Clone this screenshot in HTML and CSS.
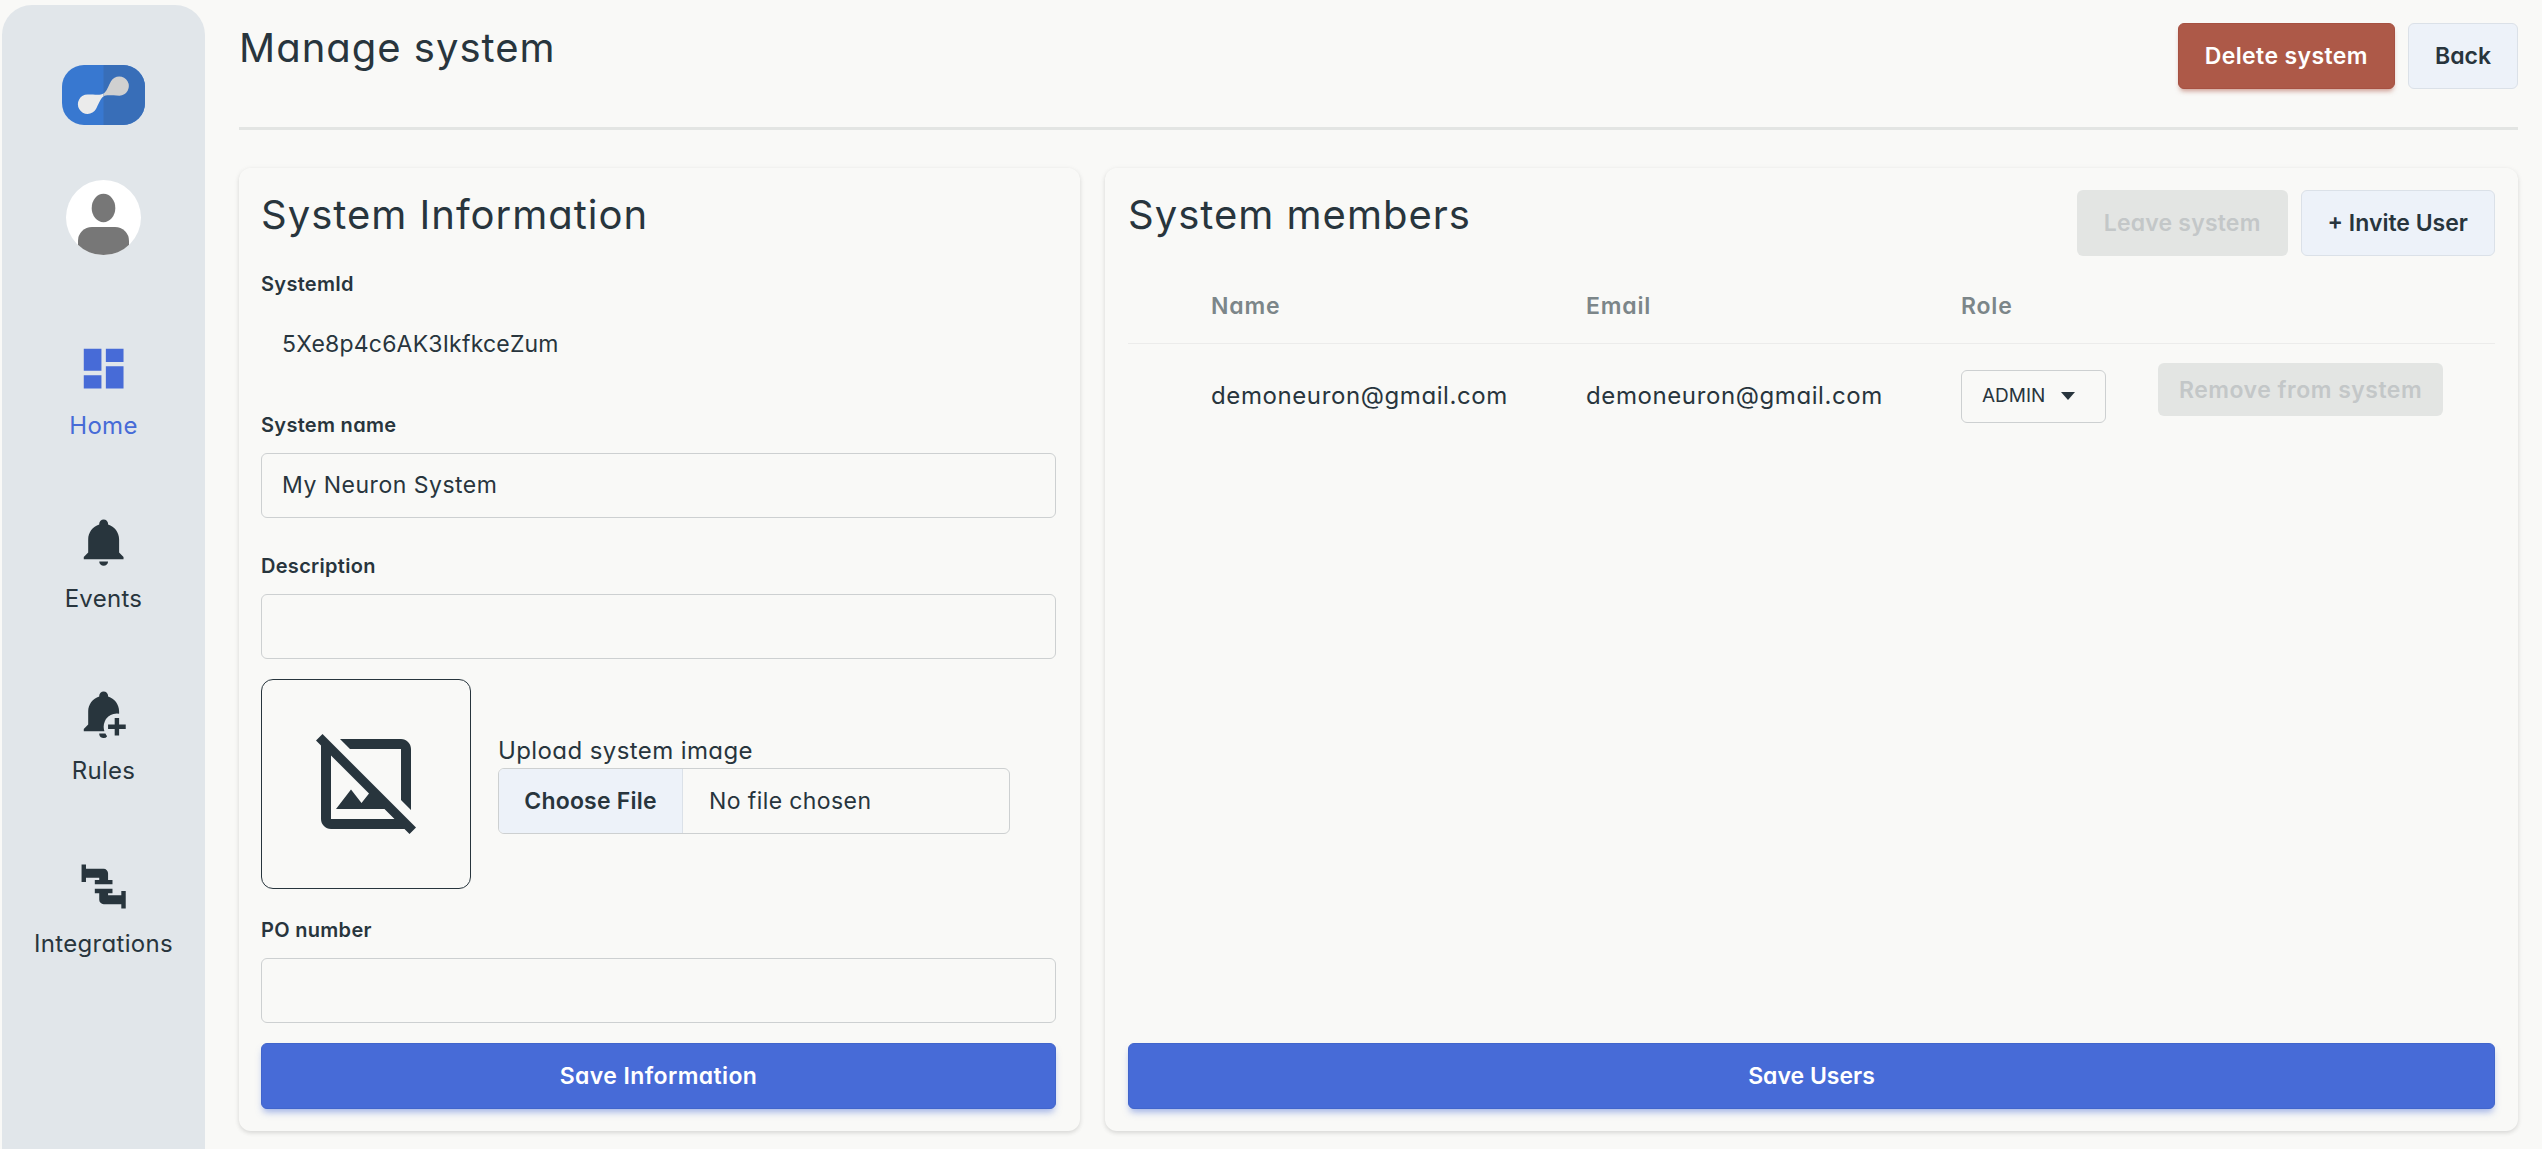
FILE: index.html
```
<!DOCTYPE html>
<html lang="en">
<head>
  <meta charset="UTF-8">
  <meta name="viewport" content="width=device-width, initial-scale=1.0">
  <title>Manage system</title>
  <link rel="stylesheet" href="styles.css">
</head>
<body>
  <div class="app">
    <!-- Sidebar -->
    <aside class="sidebar">
      <svg class="logo" viewBox="0 0 83 60">
        <rect width="83" height="60" rx="22" fill="#3878d0"/>
        <path d="M41.5 0H61a22 22 0 0 1 22 22V38a22 22 0 0 1-22 22H41.5z" fill="#386eb8"/>
        <path d="M41.5 28.5C39 30.2 35 29.6 25.5 29.500a9.700 9.700 0 1 0 8.500 14.500C36.500 39.500 38.500 33 41.500 31.500z" fill="#ebebeb"/>
        <path d="M41.5 31.5C44 29.8 48 30.4 57.5 30.700a9.600 9.600 0 1 0-8.500-14.500C46.500 20.500 44.500 27 41.500 28.500z" fill="#d0d0d0"/>
      </svg>
      <svg class="avatar" viewBox="0 0 75 75">
        <clipPath id="avatar-clip"><circle cx="37.5" cy="37.5" r="37.5"/></clipPath>
        <g clip-path="url(#avatar-clip)">
          <rect width="75" height="75" fill="#fff"/>
          <ellipse cx="37.5" cy="28" rx="11.8" ry="14.2" fill="#777"/>
          <rect x="12" y="47" width="51" height="40" rx="14" fill="#777"/>
        </g>
      </svg>
      <nav class="nav">
        <a class="nav-item active">
          <svg class="nav-icon" viewBox="0 0 24 24"><path d="M13 3v6h8V3m-8 18h8V11h-8M3 21h8v-6H3m0-2h8V3H3z"/></svg>
          <span>Home</span>
        </a>
        <a class="nav-item">
          <svg class="nav-icon" viewBox="0 0 24 24"><path d="M21 19v1H3v-1l2-2v-6c0-3.1 2.03-5.83 5-6.71V4a2 2 0 0 1 4 0v.29c2.97.88 5 3.61 5 6.71v6l2 2m-7 2a2 2 0 0 1-4 0"/></svg>
          <span>Events</span>
        </a>
        <a class="nav-item">
          <svg class="nav-icon" viewBox="0 0 24 24"><path d="M10 21h2.8c.2.5.5 1 .8 1.3A2 2 0 0 1 10 21m2.34-1H3v-1l2-2v-6c0-3.1 2.03-5.83 5-6.71V4a2 2 0 0 1 4 0v.29c2.97.88 5 3.61 5 6.71v1.08A6 6 0 0 0 12 18c0 .7.12 1.37.34 2M17 14h2v3h3v2h-3v3h-2v-3h-3v-2h3z"/></svg>
          <span>Rules</span>
        </a>
        <a class="nav-item">
          <svg class="nav-icon" viewBox="0 0 24 24"><path d="M16 9v2H8V9h2V8H4v2H2V2h2v2h8a2 2 0 0 1 2 2v3h2m-6 6v3a2 2 0 0 0 2 2h8v2h2v-8h-2v2h-6v-1h2v-2H8v2h2z"/></svg>
          <span>Integrations</span>
        </a>
      </nav>
    </aside>

    <!-- Main content -->
    <main class="main">
      <header class="page-header">
        <h1 class="title">Manage system</h1>
        <div class="actions">
          <button class="btn btn-error">Delete system</button>
          <button class="btn btn-soft">Back</button>
        </div>
      </header>

      <div class="cards">
        <section class="card card-info">
          <h2 class="title">System Information</h2>
          <div class="field">
            <label class="label">SystemId</label>
            <div class="input input-plain">5Xe8p4c6AK3IkfkceZum</div>
          </div>
          <div class="field">
            <label class="label">System name</label>
            <div class="input input-name">My Neuron System</div>
          </div>
          <div class="field">
            <label class="label">Description</label>
            <div class="input"></div>
          </div>
          <div class="upload">
            <div class="preview">
              <svg class="preview-icon" viewBox="0 0 24 24"><path d="M22 20.7L3.3 2 2 3.3l1 1V19c0 1.1.9 2 2 2h14.7l1 1 1.3-1.3M5 19V6.3l7.6 7.6-1.5 1.9L9 13.1 6 17h9.7l2 2H5M8.8 5l-2-2H19c1.1 0 2 .9 2 2v12.2l-2-2V5H8.8"/></svg>
            </div>
            <div class="upload-body">
              <div class="upload-label">Upload system image</div>
              <div class="file">
                <span class="file-btn">Choose File</span>
                <span class="file-name">No file chosen</span>
              </div>
            </div>
          </div>
          <div class="field">
            <label class="label">PO number</label>
            <div class="input"></div>
          </div>
          <button class="btn btn-primary btn-save">Save Information</button>
        </section>

        <section class="card card-members">
          <div class="card-head">
            <h2 class="title">System members</h2>
            <div class="actions">
              <button class="btn btn-disabled" disabled>Leave system</button>
              <button class="btn btn-soft">+ Invite User</button>
            </div>
          </div>
          <div class="table">
            <div class="row row-head">
              <span></span>
              <span>Name</span>
              <span>Email</span>
              <span>Role</span>
              <span></span>
            </div>
            <div class="row">
              <span></span>
              <span class="member">demoneuron@gmail.com</span>
              <span class="member">demoneuron@gmail.com</span>
              <span class="select">ADMIN <i class="caret"></i></span>
              <button class="btn btn-small btn-disabled" disabled>Remove from system</button>
            </div>
          </div>
          <button class="btn btn-primary">Save Users</button>
        </section>
      </div>
    </main>
  </div>
</body>
</html>
```
FILE: styles.css
```
* {
  box-sizing: border-box;
}

body {
  margin: 0;
  background-color: #f9f9f7;
  color: #28353d;
  font-family: Inter, "Open Sans", sans-serif;
  font-feature-settings: "cv11";
  font-size: 23px;
  letter-spacing: 0.2px;
  line-height: 36px;
}

.app {
  display: flex;
  height: 1149px;
  overflow: hidden;
}

/* Sidebar */
.sidebar {
  display: flex;
  flex-direction: column;
  align-items: center;
  width: 203px;
  margin: 5px 34px 0 2px;
  padding-top: 60px;
  background-color: #e1e6ea;
  border-radius: 30px 30px 0 0;
}

.logo {
  width: 83px;
  height: 60px;
}

.avatar {
  width: 75px;
  height: 75px;
  margin-top: 55px;
}

.nav {
  display: flex;
  flex-direction: column;
  gap: 70.5px;
  margin-top: 87px;
  font-size: 24px;
  letter-spacing: 0.3px;
}

.nav-item {
  display: flex;
  flex-direction: column;
  align-items: center;
  gap: 13px;
  height: 102px;
}

.nav-icon {
  width: 53.3px;
  height: 53.3px;
  fill: currentColor;
}

.active {
  color: #476bd7;
}

/* Main content */
.main {
  flex: 1;
  margin-right: 24px;
}

.page-header {
  display: flex;
  justify-content: space-between;
  height: 130px;
  padding-top: 23px;
  border-bottom: 3px solid #e3e5e3;
}

.title {
  margin: 0;
  font-size: 40px;
  font-weight: 400;
  letter-spacing: 1px;
  line-height: 50px;
}

.actions {
  display: flex;
  gap: 13px;
}

.cards {
  display: flex;
  gap: 25px;
  margin-top: 38px;
}

.card {
  display: flex;
  flex-direction: column;
  height: 963px;
  padding: 22px 23px;
  border-radius: 12px;
  box-shadow: 0 2px 4px rgba(0, 0, 0, 0.1), 0 1px 6px rgba(0, 0, 0, 0.05);
}

.card-info {
  width: 841px;
  padding: 22px 24px 22px 22px;
}

.card-info .title {
  margin-bottom: 31px;
}

.card-members {
  flex: 1;
}

.card-head {
  display: flex;
  justify-content: space-between;
}

/* Buttons */
.btn {
  flex-shrink: 0;
  height: 66px;
  padding: 0 26px;
  border: 1px solid transparent;
  border-radius: 6px;
  font: inherit;
  font-weight: 600;
  letter-spacing: 0;
}

.btn-error {
  background-color: #ad5948;
  border-color: #a65142;
  color: #fff;
  letter-spacing: 0.4px;
  box-shadow: 0 4px 5px -2px rgba(173, 89, 72, 0.6);
}

.btn-soft {
  background-color: #edf2f9;
  border-color: #dbe1e8;
  color: #28353d;
}

.btn-disabled {
  background-color: #e3e5e3;
  color: #c3c7c8;
  letter-spacing: 0.2px;
}

.btn-primary {
  margin-top: auto;
  background-color: #476bd7;
  border-color: #4165cb;
  color: #fff;
  box-shadow: 0 5px 7px -2px rgba(71, 107, 215, 0.5);
}

.btn-save {
  letter-spacing: 0.4px;
}

.btn-small {
  align-self: start;
  height: 53px;
  padding: 0 20px;
  letter-spacing: 0.5px;
}

/* Form */
.field {
  display: flex;
  flex-direction: column;
  gap: 15px;
  margin-bottom: 35px;
}

.label {
  font-size: 20px;
  font-weight: 600;
  letter-spacing: 0.3px;
  line-height: 26px;
}

.input {
  height: 65px;
  padding: 0 20px;
  border: 1px solid #cdd0d1;
  border-radius: 6px;
  line-height: 63px;
}

.input-plain {
  border-color: transparent;
}

.input-name {
  letter-spacing: 0.5px;
}

.upload {
  display: flex;
  align-items: center;
  gap: 27px;
  margin: -15px 0 28px;
}

.upload + .field {
  margin-bottom: 0;
}

.preview {
  display: flex;
  align-items: center;
  justify-content: center;
  width: 210px;
  height: 210px;
  border: 1px solid #28353d;
  border-radius: 12px;
}

.preview-icon {
  width: 120px;
  height: 120px;
  fill: #28353d;
}

.upload-body {
  padding-bottom: 1px;
}

.upload-label {
  font-size: 24px;
  letter-spacing: 0.4px;
  line-height: 35px;
}

.file {
  display: flex;
  width: 512px;
  height: 66px;
  border: 1px solid #cdd0d1;
  border-radius: 6px;
  line-height: 64px;
  overflow: hidden;
}

.file-btn {
  width: 184px;
  border-right: 1px solid #dbe1e8;
  background-color: #edf2f9;
  font-weight: 600;
  text-align: center;
}

.file-name {
  padding-left: 26px;
  letter-spacing: 0.4px;
}

/* Members table */
.table {
  margin-top: 13px;
}

.row {
  display: grid;
  grid-template-columns: 83px 375px 375px 197px auto;
  align-items: center;
  justify-content: start;
  height: 104px;
  padding: 19px 0;
}

.row-head {
  height: 75px;
  border-bottom: 1px solid #ececeb;
  color: #7c8689;
  font-weight: 600;
  letter-spacing: 0.8px;
}

.member {
  font-size: 24px;
  letter-spacing: 0.6px;
}

.select {
  display: flex;
  align-items: center;
  gap: 16px;
  width: 145px;
  height: 53px;
  padding-left: 20px;
  border: 1px solid #cdd0d1;
  border-radius: 6px;
  font-size: 19px;
  letter-spacing: 0;
}

.caret {
  border: 7px solid transparent;
  border-top: 8px solid #28353d;
  border-bottom: 0;
}
```
